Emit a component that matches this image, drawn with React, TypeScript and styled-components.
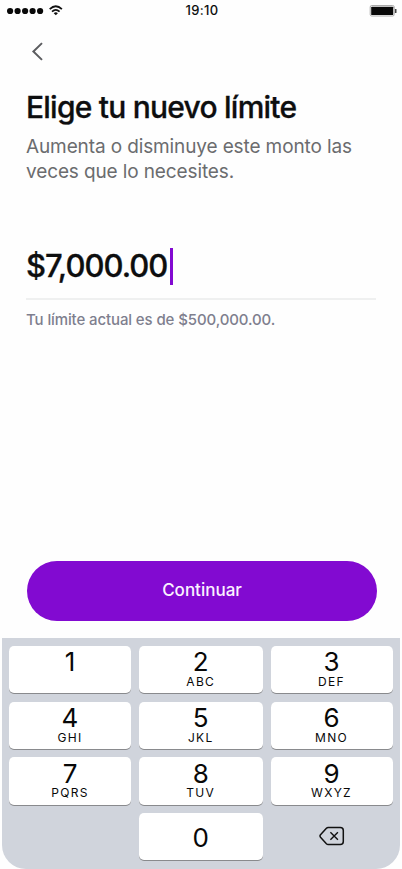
import React from "react";
import styled, { createGlobalStyle } from "styled-components";

const GlobalStyle = createGlobalStyle`
  * { box-sizing: border-box; }
  body { margin: 0; background: #fff; }
  button { font: inherit; color: inherit; border: 0; padding: 0; background: none; }
`;

const Screen = styled.div`
  width: 402px;
  height: 869px;
  display: flex;
  flex-direction: column;
  overflow: hidden;
  background: #fefefe;
  color: #0d0e0f;
  font-family: Inter, "Liberation Sans", sans-serif;
`;

const StatusBar = styled.header`
  height: 22px;
  flex: none;
  display: grid;
  grid-template-columns: 1fr auto 1fr;
  padding: 0 5px 0 7px;
`;

const StatusIcon = styled.svg<{ $end?: boolean }>`
  display: block;
  justify-self: ${(p) => (p.$end ? "end" : "start")};
`;

const Clock = styled.time`
  font-size: 13px;
  line-height: 21px;
  font-weight: 500;
  letter-spacing: 0.3px;
`;

const Nav = styled.nav`
  height: 60px;
  flex: none;
  padding: 20px 0 0 31px;
`;

const BackButton = styled.button`
  display: block;
`;

const Content = styled.main`
  flex: 1;
  padding: 0 26px;
  display: flex;
  flex-direction: column;
`;

const Title = styled.h1`
  margin: 7px 0 0;
  font-size: 30px;
  line-height: 36px;
  font-weight: 500;
  letter-spacing: -0.77px;
  -webkit-text-stroke: 0.3px currentColor;
  white-space: nowrap;
`;

const Subtitle = styled.p`
  margin: 9px 0 0;
  font-size: 19px;
  line-height: 25px;
  font-weight: 400;
  letter-spacing: -0.12px;
  color: #6b6c6e;
  white-space: nowrap;
`;

const AmountField = styled.div`
  height: 52px;
  margin-top: 64px;
  display: flex;
  align-items: flex-start;
  border-bottom: 2px solid #eff0f0;
`;

const Amount = styled.span`
  width: 144px;
  font-size: 31px;
  line-height: 36px;
  font-weight: 500;
  letter-spacing: -1px;
  -webkit-text-stroke: 0.3px currentColor;
  white-space: nowrap;
`;

const Caret = styled.span`
  width: 2.5px;
  height: 37px;
  background: #820ad1;
`;

const Hint = styled.p`
  margin: 9px 0 0;
  font-size: 15px;
  line-height: 22px;
  font-weight: 500;
  letter-spacing: -0.11px;
  color: #7e7f8e;
  white-space: nowrap;
`;

const ContinueButton = styled.button`
  width: 350px;
  height: 60px;
  margin: auto 0 17px 1px;
  border-radius: 30px;
  background: #820ad1;
  color: #fbf3ff;
  font-size: 17px;
  font-weight: 500;
  line-height: 58px;
  padding-bottom: 2px;
`;

const Keypad = styled.section`
  width: 398px;
  height: 231px;
  flex: none;
  margin-left: 2px;
  padding: 8px 7px 0;
  display: grid;
  grid-template-columns: 122px 123.5px 122px;
  grid-auto-rows: 47.2px;
  column-gap: 8px;
  row-gap: 8.5px;
  background: #d0d4dc;
  border-radius: 0 0 24px 24px;
`;

const Key = styled.button<{ $plain?: boolean }>`
  display: flex;
  flex-direction: column;
  align-items: center;
  justify-content: ${(p) => (p.$plain ? "center" : "flex-start")};
  padding: ${(p) => (p.$plain ? "2px 0 0 0" : "3.4px 0 0 0")};
  border-radius: 5px;
  background: #fff;
  box-shadow: 0 1px 0 #898a8d;
  color: #080808;
`;

const EraseKey = styled.button`
  display: flex;
  align-items: center;
  justify-content: center;
  padding-bottom: 1px;
`;

const Digit = styled.span`
  font-size: 26px;
  line-height: 25px;
`;

const Letters = styled.span`
  margin-top: 0.5px;
  font-size: 12px;
  line-height: 14px;
  letter-spacing: 1.3px;
`;

const keys = [
  ["1", ""],
  ["2", "ABC"],
  ["3", "DEF"],
  ["4", "GHI"],
  ["5", "JKL"],
  ["6", "MNO"],
  ["7", "PQRS"],
  ["8", "TUV"],
  ["9", "WXYZ"],
];

export default function App() {
  return (
    <>
      <GlobalStyle />
      <Screen>
        <StatusBar>
          <StatusIcon width="58" height="22" viewBox="0 0 58 22">
            {[3.1, 10.6, 18.1, 25.6, 33.1].map((x) => (
              <circle key={x} cx={x} cy="11" r="3.1" fill="#080808" />
            ))}
            <g fill="none" stroke="#111" strokeWidth="1.7">
              <path d="M42.7 9.2Q48.8 3.3 54.9 9.2" />
              <path d="M45 11.6Q48.8 8 52.6 11.6" />
            </g>
            <path d="M46.7 13.2Q48.8 11.4 50.9 13.2L48.8 15.3Z" fill="#111" />
          </StatusIcon>
          <Clock>19:10</Clock>
          <StatusIcon $end width="28" height="22" viewBox="0 0 28 22">
            <rect x="1.2" y="5.5" width="24" height="10.5" rx="1.5" fill="#fff" stroke="#aaa" strokeWidth="1" />
            <rect x="2.2" y="6.7" width="22" height="8.3" rx="0.6" fill="#080808" />
            <path d="M25.9 9h1.1q.5 0 .5.6v2.8q0 .6-.5.6h-1.1z" fill="#444" />
          </StatusIcon>
        </StatusBar>
        <Nav>
          <BackButton aria-label="Volver">
            <svg width="14" height="20" viewBox="0 0 14 20" display="block">
              <path d="M11 1.1L2.4 9.5L11 17.9" fill="none" stroke="#5c5d60" strokeWidth="2" />
            </svg>
          </BackButton>
        </Nav>
        <Content>
          <Title>Elige tu nuevo límite</Title>
          <Subtitle>
            Aumenta o disminuye este monto las
            <br />
            veces que lo necesites.
          </Subtitle>
          <AmountField>
            <Amount>$7,000.00</Amount>
            <Caret />
          </AmountField>
          <Hint>Tu límite actual es de $500,000.00.</Hint>
          <ContinueButton>Continuar</ContinueButton>
        </Content>
        <Keypad>
          {keys.map(([digit, letters]) => (
            <Key key={digit}>
              <Digit>{digit}</Digit>
              {letters && <Letters>{letters}</Letters>}
            </Key>
          ))}
          <span />
          <Key $plain>
            <Digit>0</Digit>
          </Key>
          <EraseKey aria-label="Borrar">
            <svg width="26" height="20" viewBox="0 0 26 20" fill="none" stroke="#111">
              <path
                d="M9.2 1.5H21.3Q24.3 1.5 24.3 4.5V15.5Q24.3 18.5 21.3 18.5H9.2Q8.2 18.5 7.4 17.7L1.5 11.2Q.5 10 1.5 8.8L7.4 2.3Q8.2 1.5 9.2 1.5Z"
                strokeWidth="1.5"
              />
              <path d="M11.4 6.2L18.9 13.8M18.9 6.2L11.4 13.8" strokeWidth="1.4" />
            </svg>
          </EraseKey>
        </Keypad>
      </Screen>
    </>
  );
}
